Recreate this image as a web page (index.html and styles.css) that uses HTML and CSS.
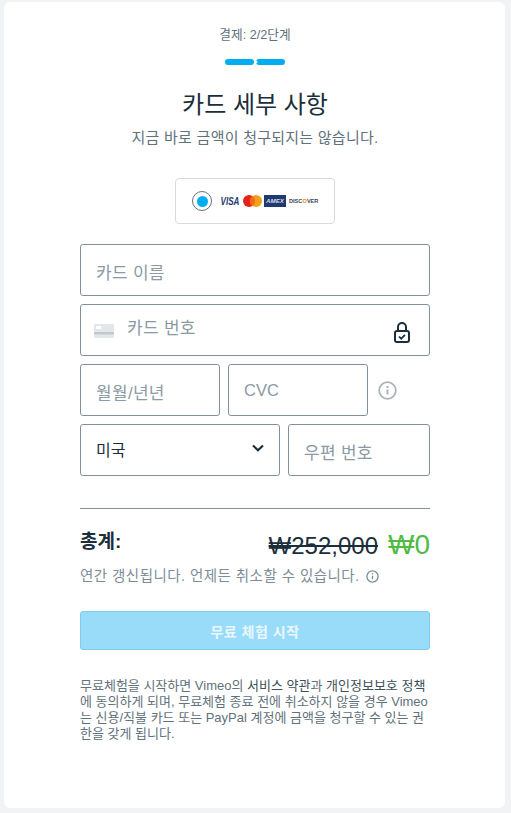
FILE: index.html
```html
<!DOCTYPE html>
<html lang="ko">
<head>
  <meta charset="UTF-8" />
  <meta name="viewport" content="width=device-width, initial-scale=1.0"/>
  <title>카드 세부 사항</title>
  <link rel="stylesheet" href="styles.css">
</head>
<body>

  <main class="panel">
    <p class="step">결제: 2/2단계</p>
    <div class="progress">
      <span class="bar bar-left"></span>
      <span class="bar bar-right"></span>
    </div>
    <h1 class="title">카드 세부 사항</h1>
    <p class="subtitle">지금 바로 금액이 청구되지는 않습니다.</p>

    <div class="method">
      <span class="radio"><span class="radio-dot"></span></span>
      <svg class="logos" width="100" height="16" viewBox="0 0 100 16">
        <text x="0.500" y="11.500" class="visa" textLength="19" lengthAdjust="spacingAndGlyphs">VISA</text>
        <circle cx="29" cy="8" r="6" fill="#e2231a"/>
        <circle cx="36" cy="8" r="6" fill="#f79e1b"/>
        <path d="M32.500 3.100a6 6 0 0 1 0 9.800a6 6 0 0 1 0-9.800z" fill="#f26a1b"/>
        <rect x="44" y="2" width="22" height="12" fill="#1f3a6e"/>
        <text x="46" y="10" class="amex" textLength="18" lengthAdjust="spacingAndGlyphs">AMEX</text>
        <text x="69" y="10.300" class="discover">DISC</text>
        <text x="82.400" y="10.300" class="discover discover-o">O</text>
        <text x="86.900" y="10.300" class="discover">VER</text>
      </svg>
    </div>

    <form class="fields">
      <div class="field"><span class="hint">카드 이름</span></div>

      <div class="field field-number">
        <svg class="card-icon" width="20" height="14" viewBox="0 0 20 14">
          <rect width="20" height="14" rx="1" fill="#e4e7e9"/>
          <rect y="8" width="20" height="2.500" fill="#c3c8cc"/>
          <rect x="2" y="2" width="5" height="3" fill="#fff"/>
        </svg>
        <span class="hint hint-number">카드 번호</span>
        <svg class="lock" width="16" height="22" viewBox="0 0 16 22" fill="none" stroke="#1a2e3b" stroke-width="2">
          <path d="M4 10V6a4 4 0 0 1 8 0v4"/>
          <rect x="1" y="10" width="14" height="11" rx="2"/>
          <path d="M5 15.500l2.200 2.200 3.800-3.800" stroke-width="1.700"/>
        </svg>
      </div>

      <div class="row">
        <div class="field field-short"><span class="hint">월월/년년</span></div>
        <div class="field field-short"><span class="hint hint-latin">CVC</span></div>
        <svg class="info info-large" width="19" height="19" viewBox="0 0 19 19" fill="none" stroke="#a9b4ba" stroke-width="1.800">
          <circle cx="9.500" cy="9.500" r="8.300"/>
          <path d="M9.500 8.500v5" stroke-width="2"/>
          <path d="M9.500 5v2" stroke-width="2"/>
        </svg>
      </div>

      <div class="row">
        <div class="field field-country">
          <span class="country">미국</span>
          <svg width="12" height="8" viewBox="0 0 12 8" fill="none" stroke="#1a2e3b" stroke-width="2.200">
            <path d="M1 1.500L6 6.200l5-4.700"/>
          </svg>
        </div>
        <div class="field field-zip"><span class="hint">우편 번호</span></div>
      </div>
    </form>

    <div class="summary">
      <div class="total-row">
        <span class="total-label">총계:</span>
        <span class="prices">
          <span class="price-old">₩252,000</span>
          <span class="price-new">₩0</span>
        </span>
      </div>
      <p class="renew">
        연간 갱신됩니다. 언제든 취소할 수 있습니다.
        <svg class="info" width="13" height="13" viewBox="0 0 13 13" fill="none" stroke="#7c8d96" stroke-width="1.300">
          <circle cx="6.500" cy="6.500" r="5.600"/>
          <path d="M6.500 5.800v3.500"/>
          <path d="M6.500 3.200v1.400"/>
        </svg>
      </p>
    </div>

    <button class="submit" type="button">무료 체험 시작</button>

    <p class="legal">무료체험을 시작하면 Vimeo의 <a href="#">서비스 약관</a>과 <a href="#">개인정보보호 정책</a>에 동의하게 되며, 무료체험 종료 전에 취소하지 않을 경우 Vimeo는 신용/직불 카드 또는 PayPal 계정에 금액을 청구할 수 있는 권한을 갖게 됩니다.</p>
  </main>

</body>
</html>
```

FILE: styles.css
```css
* {
  box-sizing: border-box;
}

body {
  margin: 0;
  height: 813px;
  overflow: hidden;
  padding: 2px 6px 5px 4px;
  background-color: #f1f3f5;
  color: #1a2e3b;
  font-family: "Liberation Sans", "Noto Sans CJK KR", sans-serif;
}

.panel {
  height: 806px;
  padding: 24px 75px 0 76px;
  background-color: #ffffff;
  border-radius: 6px;
  display: flex;
  flex-direction: column;
}

.step {
  margin: 0;
  font-size: 12.700px;
  line-height: 18px;
  color: #5f717c;
  text-align: center;
}

.progress {
  display: flex;
  justify-content: center;
  gap: 2px;
  margin-top: 15px;
}

.bar {
  width: 29px;
  height: 6px;
  background-color: #00adef;
  border-radius: 3px;
}

.bar-right {
  position: relative;
  overflow: hidden;
}

.bar-right::before {
  content: "";
  position: absolute;
  top: 1px;
  left: -3px;
  width: 4px;
  height: 4px;
  background-color: #ffffff;
  transform: rotate(45deg);
}

.title {
  margin: 24px 0 0;
  font-size: 24px;
  line-height: 32px;
  font-weight: 400;
  text-align: center;
}

.subtitle {
  margin: 7px 0 0;
  font-size: 15px;
  line-height: 20px;
  letter-spacing: 0.25px;
  color: #5f717c;
  text-align: center;
}

.method {
  align-self: center;
  width: 160px;
  height: 46px;
  margin-top: 30px;
  padding-left: 16px;
  display: flex;
  align-items: center;
  gap: 8px;
  border: 1px solid #d5dbde;
  border-radius: 4px;
}

.radio {
  width: 20px;
  height: 20px;
  display: flex;
  align-items: center;
  justify-content: center;
  border: 1px solid #5f717c;
  border-radius: 50%;
}

.radio-dot {
  width: 11px;
  height: 11px;
  background-color: #00adef;
  border-radius: 50%;
}

.logos .visa {
  font: italic 700 10px "Liberation Sans", sans-serif;
  fill: #1f3a6e;
}

.logos .amex {
  font: italic 700 6px "Liberation Sans", sans-serif;
  fill: #cfd8e6;
}

.logos .discover {
  font: 700 5.600px "Liberation Sans", sans-serif;
  fill: #3b4650;
}

.logos .discover-o {
  fill: #f58220;
}

.fields {
  display: flex;
  flex-direction: column;
  gap: 8px;
  margin-top: 20px;
}

.row {
  display: flex;
  align-items: center;
  gap: 8px;
}

.field {
  height: 52px;
  padding: 0 15px;
  display: flex;
  align-items: center;
  border: 1px solid #7f929c;
  border-radius: 3px;
  background-color: #ffffff;
}

.hint {
  font-size: 17px;
  color: #8b9aa3;
  letter-spacing: 0.3px;
  padding-top: 2px;
}

.hint-latin {
  font-size: 16.500px;
  letter-spacing: 0;
  padding-top: 0;
}

.field-number {
  padding-left: 13px;
}

.card-icon {
  margin-right: 13px;
  margin-top: 2px;
}

.hint-number {
  padding-top: 0;
  margin-top: -8px;
}

.lock {
  margin-left: auto;
  margin-top: 3px;
  margin-right: 4px;
}

.field-short {
  width: 140px;
}

.info-large {
  margin-left: 2px;
}

.field-country {
  width: 200px;
  justify-content: space-between;
  font-size: 16px;
}

.field-country svg {
  margin-top: -4px;
}

.country {
  margin-top: -2px;
}

.field-zip {
  width: 142px;
}

.summary {
  margin-top: 32px;
  padding-top: 20px;
  border-top: 1px solid #7f929c;
}

.total-row {
  display: flex;
  justify-content: space-between;
  align-items: flex-start;
}

.total-label {
  font-size: 19px;
  line-height: 26px;
  font-weight: 700;
}

.prices {
  display: flex;
  align-items: baseline;
  gap: 10px;
  line-height: 32px;
}

.price-old {
  font-size: 24px;
  color: #1a2e3b;
  text-decoration: line-through;
}

.price-new {
  font-size: 28px;
  color: #4fbb45;
}

.renew {
  margin: 4px 0 0;
  font-size: 14.500px;
  line-height: 20px;
  color: #7c8d96;
  letter-spacing: 0.45px;
}

.renew .info {
  vertical-align: -2px;
  margin-left: 2px;
}

.submit {
  height: 39px;
  margin-top: 25px;
  border: 1px solid #7dcdf0;
  border-radius: 3px;
  background-color: #99dcf9;
  color: #e9f7fd;
  font-family: inherit;
  font-size: 14px;
  font-weight: 700;
  letter-spacing: 0.5px;
}

.legal {
  margin: 28px 0 0;
  font-size: 13px;
  line-height: 16px;
  color: #5f717c;
}

.legal a {
  color: #3c4f5b;
  text-decoration: none;
}
```
